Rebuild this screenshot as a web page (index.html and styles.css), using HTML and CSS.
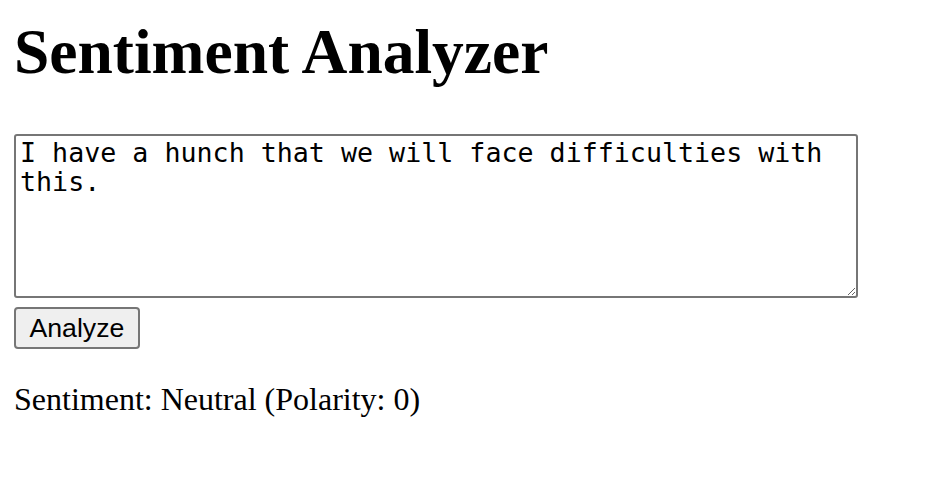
FILE: index.html
```html
<!DOCTYPE html>
<html lang="en">
<head>
<meta charset="utf-8">
<title>Sentiment Analyzer</title>
<link rel="stylesheet" href="styles.css">
</head>
<body>
<h1 class="title">Sentiment Analyzer</h1>
<textarea class="input" rows="5" cols="50">I have a hunch that we will face difficulties with this.</textarea>
<button class="analyze" type="button">Analyze</button>
<p class="result">Sentiment: Neutral (Polarity: 0)</p>
</body>
</html>
```

FILE: styles.css
```css
html, body {
  background: #ffffff;
}
body {
  margin: 0;
  padding: 0 14px;
  font-family: "Liberation Serif", "Times New Roman", serif;
  color: #000000;
}
.title {
  margin: 15px 0 44.5px;
  font-size: 63.5px;
  font-weight: bold;
  line-height: normal;
}
.input {
  display: block;
  box-sizing: border-box;
  width: 844px;
  height: 164px;
  margin: 0;
  padding: 2px 4px;
  border: 2px solid #767676;
  border-radius: 3px;
  background: #ffffff;
  color: #000000;
  font-family: "DejaVu Sans Mono", monospace;
  font-size: 26.67px;
  line-height: 29.5px;
}
.analyze {
  display: block;
  box-sizing: border-box;
  height: 42px;
  margin: 9.5px 0 0;
  padding: 0 13.5px;
  border: 2px solid #767676;
  border-radius: 4px;
  background: #efefef;
  color: #000000;
  font-family: "Liberation Sans", Arial, sans-serif;
  font-size: 26.67px;
  line-height: normal;
}
.result {
  margin: 32px 0 0;
  font-size: 32px;
  line-height: normal;
}
```
